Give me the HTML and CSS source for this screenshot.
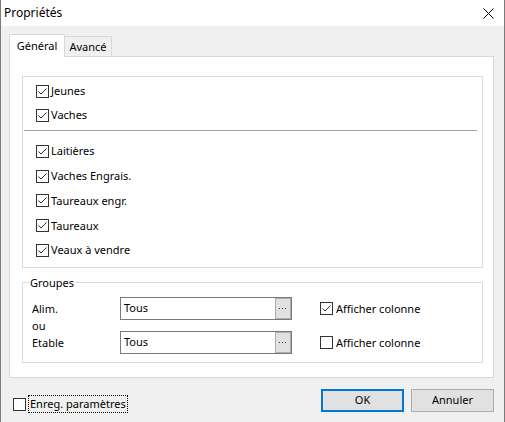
FILE: index.html
```html
<!DOCTYPE html>
<html lang="fr">
<head>
<meta charset="utf-8">
<title>Propriétés</title>
<link rel="stylesheet" href="styles.css">
</head>
<body>
<div class="window">
  <div class="titlebar">
    <span class="title">Propriétés</span>
    <svg class="close" width="11" height="11" viewBox="0 0 11 11"><path d="M0.5 0.5 L10.5 10.5 M10.5 0.5 L0.5 10.5" stroke="#000" stroke-width="1" fill="none"/></svg>
  </div>
  <div class="content">
    <div class="tabs">
      <div class="tab active">Général</div>
      <div class="tab">Avancé</div>
      <div class="tab-fill"></div>
    </div>
    <div class="page">
      <div class="group list">
        <div class="row"><span class="box"><svg width="11" height="11" viewBox="0 0 11 11"><path d="M1.5 5.5 L4 8 L9.5 2.5" stroke="#333" stroke-width="1" fill="none"/></svg></span><span>Jeunes</span></div>
        <div class="row"><span class="box"><svg width="11" height="11" viewBox="0 0 11 11"><path d="M1.5 5.5 L4 8 L9.5 2.5" stroke="#333" stroke-width="1" fill="none"/></svg></span><span>Vaches</span></div>
        <div class="sep"></div>
        <div class="row tall"><span class="box"><svg width="11" height="11" viewBox="0 0 11 11"><path d="M1.5 5.5 L4 8 L9.5 2.5" stroke="#333" stroke-width="1" fill="none"/></svg></span><span>Laitières</span></div>
        <div class="row tall"><span class="box"><svg width="11" height="11" viewBox="0 0 11 11"><path d="M1.5 5.5 L4 8 L9.5 2.5" stroke="#333" stroke-width="1" fill="none"/></svg></span><span>Vaches Engrais.</span></div>
        <div class="row tall"><span class="box"><svg width="11" height="11" viewBox="0 0 11 11"><path d="M1.5 5.5 L4 8 L9.5 2.5" stroke="#333" stroke-width="1" fill="none"/></svg></span><span>Taureaux engr.</span></div>
        <div class="row tall"><span class="box"><svg width="11" height="11" viewBox="0 0 11 11"><path d="M1.5 5.5 L4 8 L9.5 2.5" stroke="#333" stroke-width="1" fill="none"/></svg></span><span>Taureaux</span></div>
        <div class="row tall"><span class="box"><svg width="11" height="11" viewBox="0 0 11 11"><path d="M1.5 5.5 L4 8 L9.5 2.5" stroke="#333" stroke-width="1" fill="none"/></svg></span><span>Veaux à vendre</span></div>
      </div>
      <fieldset class="groupes">
        <legend>Groupes</legend>
        <div class="grid">
          <div class="lbl">Alim.</div>
          <div class="field"><span class="val">Tous</span><span class="dots"><svg width="14" height="19" viewBox="0 0 14 19"><rect x="3" y="9" width="1" height="1" fill="#333"/><rect x="6" y="9" width="1" height="1" fill="#333"/><rect x="9" y="9" width="1" height="1" fill="#333"/></svg></span></div>
          <div class="colcheck"><span class="box"><svg width="11" height="11" viewBox="0 0 11 11"><path d="M1.5 5.5 L4 8 L9.5 2.5" stroke="#333" stroke-width="1" fill="none"/></svg></span><span class="clip">Afficher colonne</span></div>
          <div class="lbl">ou</div>
          <div></div>
          <div></div>
          <div class="lbl">Etable</div>
          <div class="field"><span class="val">Tous</span><span class="dots"><svg width="14" height="19" viewBox="0 0 14 19"><rect x="3" y="9" width="1" height="1" fill="#333"/><rect x="6" y="9" width="1" height="1" fill="#333"/><rect x="9" y="9" width="1" height="1" fill="#333"/></svg></span></div>
          <div class="colcheck"><span class="box"></span><span class="clip">Afficher colonne</span></div>
        </div>
      </fieldset>
    </div>
    <div class="footer">
      <div class="save"><span class="box"></span><span class="focus">Enreg. paramètres</span></div>
      <div class="buttons">
        <div class="btn default">OK</div>
        <div class="btn">Annuler</div>
      </div>
    </div>
  </div>
</div>
</body>
</html>
```
FILE: styles.css
```css
html, body {
  margin: 0;
  padding: 0;
  background: #f0f0f0;
}
body {
  font-family: "Segoe UI", "Noto Sans", sans-serif;
  font-size: 11px;
  line-height: 16px;
  color: #000;
}
.window {
  width: 505px;
  height: 422px;
  box-sizing: border-box;
  background: #f0f0f0;
  border-left: 1px solid #7a7a7a;
  border-right: 1px solid #7a7a7a;
  display: flex;
  flex-direction: column;
  overflow: hidden;
}
.titlebar {
  height: 26px;
  background: #fff;
  display: flex;
  align-items: center;
  justify-content: space-between;
  padding: 0 10px 0 3px;
  flex: none;
  font-size: 12px;
}
.title {
  margin-top: -1px;
}
.close {
  display: block;
  margin-top: 1px;
}
.content {
  padding: 8px 10px 0 8px;
  flex: 1;
}
.tabs {
  display: flex;
  align-items: flex-end;
  height: 23px;
}
.tab {
  box-sizing: border-box;
  text-align: center;
}
.tab.active {
  width: 56px;
  height: 23px;
  background: #fff;
  border: 1px solid #d9d9d9;
  border-bottom: none;
  padding-top: 3px;
}
.tab:not(.active) {
  width: 47px;
  height: 21px;
  background: #f0f0f0;
  border-top: 1px solid #d9d9d9;
  border-right: 1px solid #d9d9d9;
  border-bottom: 1px solid #d9d9d9;
  padding-top: 2px;
}
.tab-fill {
  flex: 1;
  height: 1px;
  border-bottom: 1px solid #d9d9d9;
  box-sizing: border-box;
}
.page {
  box-sizing: border-box;
  height: 321px;
  background: #fff;
  border: 1px solid #d9d9d9;
  border-top: none;
  padding: 19px 10px 0 12px;
}
.group.list {
  box-sizing: border-box;
  height: 192px;
  border: 1px solid #dcdcdc;
  padding-top: 2px;
}
.row {
  height: 24px;
  display: flex;
  align-items: center;
  gap: 2px;
  padding-left: 13px;
}
.row.tall {
  height: 24.75px;
}
.sep {
  height: 1px;
  background: #a0a0a0;
  margin: 3px 5px 8px 1px;
}
.box {
  box-sizing: border-box;
  width: 13px;
  height: 13px;
  border: 1px solid #333;
  background: #fff;
  display: inline-flex;
  flex: none;
}
.box svg {
  display: block;
}
.groupes {
  margin: 7px 0 0 0;
  padding: 7px 0 8px 6px;
  border: 1px solid #dcdcdc;
  min-width: 0;
}
.groupes legend {
  padding: 0 1px;
  line-height: 15px;
}
.grid {
  margin-left: 3px;
  display: grid;
  grid-template-columns: 88px 172px auto;
  grid-template-rows: 23px 11px 23px;
  align-items: center;
}
.lbl {
  line-height: 11px;
}
.field {
  box-sizing: border-box;
  height: 23px;
  border: 1px solid #7a7a7a;
  background: #fff;
  display: flex;
  align-items: center;
  justify-content: space-between;
  padding-left: 3px;
}
.val {
  margin-top: -1px;
}
.dots {
  box-sizing: border-box;
  width: 16px;
  height: 21px;
  background: #e1e1e1;
  border: 1px solid #adadad;
  display: block;
}
.dots svg {
  display: block;
}
.colcheck {
  padding-left: 28px;
  display: flex;
  align-items: center;
  gap: 3px;
}
.clip {
  width: 88px;
  overflow: hidden;
  white-space: nowrap;
}
.footer {
  display: flex;
  align-items: flex-start;
  padding-top: 11px;
}
.save {
  display: flex;
  align-items: center;
  gap: 2px;
  margin: 6px 0 0 4px;
}
.focus {
  border: 1px dotted #000;
  padding: 0 1px;
  line-height: 16px;
}
.buttons {
  margin-left: auto;
  display: flex;
  gap: 7px;
}
.btn {
  box-sizing: border-box;
  width: 83px;
  height: 23px;
  background: #e1e1e1;
  border: 1px solid #adadad;
  text-align: center;
  line-height: 20px;
}
.btn.default {
  border: 2px solid #0078d7;
  line-height: 18px;
}
```
